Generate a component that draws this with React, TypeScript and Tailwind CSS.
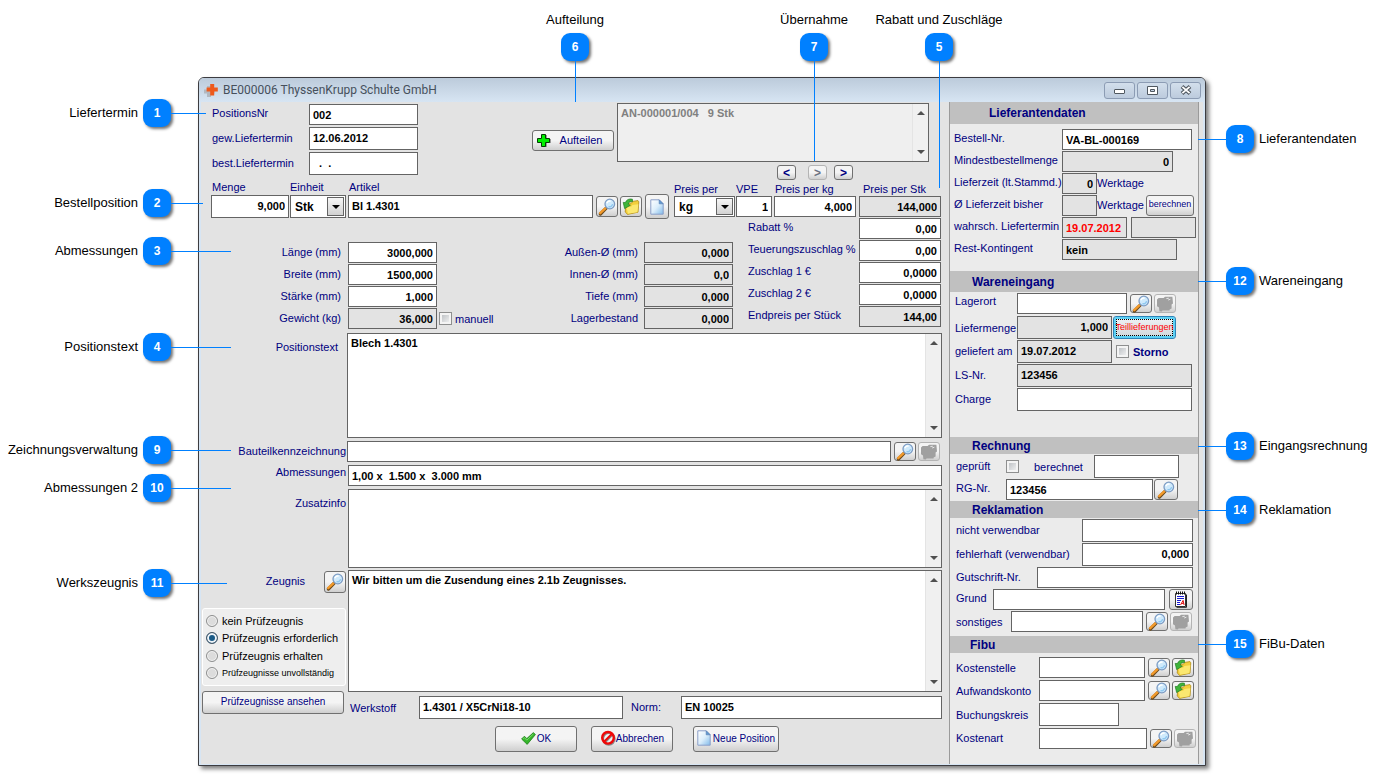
import { useState } from 'react'
import type { InputHTMLAttributes, ReactNode } from 'react'
import clsx from 'clsx'

const SANS = "font-['Liberation_Sans',Arial,sans-serif]"

const leftCallouts = [
  { no: 1, label: 'Liefertermin', top: 'top-[99px]', line: 'w-[35px]' },
  { no: 2, label: 'Bestellposition', top: 'top-[189px]', line: 'w-[32px]' },
  { no: 3, label: 'Abmessungen', top: 'top-[237px]', line: 'w-[60px]' },
  { no: 4, label: 'Positionstext', top: 'top-[333px]', line: 'w-[60px]' },
  { no: 9, label: 'Zeichnungsverwaltung', top: 'top-[436px]', line: 'w-[60px]' },
  { no: 10, label: 'Abmessungen 2', top: 'top-[474px]', line: 'w-[60px]' },
  { no: 11, label: 'Werkszeugnis', top: 'top-[569px]', line: 'w-[56px]' },
]

const rightCallouts = [
  { no: 8, label: 'Lieferantendaten', top: 'top-[125px]' },
  { no: 12, label: 'Wareneingang', top: 'top-[267px]' },
  { no: 13, label: 'Eingangsrechnung', top: 'top-[432px]' },
  { no: 14, label: 'Reklamation', top: 'top-[496px]' },
  { no: 15, label: 'FiBu-Daten', top: 'top-[630px]' },
]

const topCallouts = [
  { no: 6, label: 'Aufteilung', right: 'right-[727px]', line: 'h-[41px]' },
  { no: 7, label: 'Übernahme', right: 'right-[488px]', line: 'h-[100px]' },
  { no: 5, label: 'Rabatt und Zuschläge', right: 'right-[363px]', line: 'h-[127px]' },
]

/* ---------- Icons ---------- */

function SearchIcon() {
  return (
    <svg width="18" height="18" viewBox="0 0 18 18" aria-hidden="true">
      <path d="M8.2 10.2 2.4 16" stroke="#6b4a1c" strokeWidth="3.2" strokeLinecap="round" />
      <path d="M7.8 9.8 2.2 15.2" stroke="#f39a2b" strokeWidth="2.4" strokeLinecap="round" />
      <path d="M9.4 8.6 8 10" stroke="#777" strokeWidth="2" />
      <circle cx="11.8" cy="6" r="4.8" fill="#cfeafc" stroke="#7d9cc4" strokeWidth="1.3" />
      <path d="M8.8 5.2c.6-1.7 2.2-2.4 3.8-2" stroke="#fff" strokeWidth="1.4" fill="none" />
      <path d="M10.4 8.6c2 .7 3.8-.4 4.2-2.4" stroke="#8fc8f0" strokeWidth="1.4" fill="none" />
    </svg>
  )
}

function FolderIcon() {
  return (
    <svg width="18" height="18" viewBox="0 0 18 18" aria-hidden="true">
      <path d="M4 5.4 9.6 5l1-1.6 5.4-.8.8 1.2-.8 10.4L5.6 16.4 3.2 14z" fill="#f2cf3c" stroke="#b08a14" strokeWidth=".8" />
      <path d="m4.6 9.4 4.8-.8 1-1.6 6-.8-1 8-9.4 1.6z" fill="#fbe870" />
      <path d="M10.4 1.2C7.2.4 4.4 1.6 3.4 4.6L1.2 4.4l1.4 6.2 5.8-3.4-2.2-1c.4-2 2.2-3.2 4.4-2.6z" fill="#3fb53a" stroke="#1f7d22" strokeWidth=".7" />
    </svg>
  )
}

function PageIcon() {
  return (
    <svg width="14" height="16" viewBox="0 0 14 16" aria-hidden="true">
      <defs>
        <linearGradient id="page" x1="0" y1="0" x2="1" y2="1">
          <stop offset="0" stopColor="#ffffff" />
          <stop offset="0.5" stopColor="#dceefb" />
          <stop offset="1" stopColor="#7fbaea" />
        </linearGradient>
      </defs>
      <path d="M.8.8h8.4l4 4v10.4H.8z" fill="url(#page)" stroke="#8a9fc8" />
      <path d="M9.2.8v4h4z" fill="#5f9bd0" stroke="#5b82b8" strokeWidth=".7" />
    </svg>
  )
}

function BlobIcon() {
  return (
    <svg width="18" height="18" viewBox="0 0 18 18" aria-hidden="true">
      <path d="M1 4.4 2.6 3h5L9 1.8h7.4l.6 6.6-1.4 1.2v4l-2 .8v1.2H6.4L6 16.6l-2.6-.4L3 12.6l-2-1.4z" fill="#a0a0a0" />
      <path d="m10.4 3.6 2.4-.4M12.2 5l2.2-.8" stroke="#f0f0f0" strokeWidth=".9" />
    </svg>
  )
}

function NotepadIcon() {
  return (
    <svg width="14" height="17" viewBox="0 0 14 17" aria-hidden="true">
      <path d="M1.5 2.5h10v13h-10z" fill="#fff" stroke="#333" />
      <path d="M12.5 3.5v12.8H2.5" fill="none" stroke="#222" />
      <path d="M2.5.5v3M4.5.5v3M6.5.5v3M8.5.5v3M10.5.5v3" stroke="#111" />
      <path d="M3 5.5h7M3 7.5h7M3 9.5h4M3 11.5h3M3 13.5h3" stroke="#1a1ad0" />
      <path d="m6.5 14 2.6-4.6 1 4.6M7.4 12.4h2.4" stroke="#e01010" fill="none" />
    </svg>
  )
}

function PlusIcon() {
  return (
    <svg width="16" height="15" viewBox="0 0 16 15" aria-hidden="true">
      <path d="M6 2h5v4h4v4h-4v4H6v-4H2V6h4z" fill="#999" />
      <path d="M5.5 1.5h4v4h4v4h-4v4h-4v-4h-4v-4h4z" fill="#00f000" stroke="#043c04" strokeWidth="1" />
    </svg>
  )
}

function CheckIcon() {
  return (
    <svg width="15" height="13" viewBox="0 0 15 13" aria-hidden="true">
      <path d="M.6 7 3.4 4.2l2.4 2.4L12.4.6l2 2L6.2 12.4z" fill="#35b52a" stroke="#1e7f1a" strokeWidth=".8" />
      <path d="m2.2 6.8 1.2-1.1 2.4 2.4 6.6-6.1" stroke="#8be27c" strokeWidth=".8" fill="none" />
    </svg>
  )
}

function BanIcon() {
  return (
    <svg width="16" height="16" viewBox="0 0 16 16" aria-hidden="true">
      <circle cx="8.8" cy="8.8" r="5.8" fill="none" stroke="#888" strokeWidth="2.2" />
      <path d="m5 12.6 7.6-7.6" stroke="#888" strokeWidth="1.6" />
      <circle cx="8" cy="7.8" r="5.8" fill="none" stroke="#f00808" strokeWidth="2.4" />
      <path d="m4 11.8 7.8-7.8" stroke="#f00808" strokeWidth="2" />
    </svg>
  )
}

function LogoIcon() {
  return (
    <svg width="15" height="15" viewBox="0 0 15 15" aria-hidden="true">
      <path d="M3 3h4v3.5h3.5v4H7V14H3v-3.5H0v-4h3z" fill="#b2b8c0" />
      <path d="M6.2 1h4v3.6h3.6v4h-3.6v3.8h-4V8.6H2.6v-4h3.6z" fill="#ee5a1c" />
    </svg>
  )
}

/* ---------- Controls ---------- */

interface TextFieldProps extends InputHTMLAttributes<HTMLInputElement> {
  num?: boolean
  gray?: boolean
}

function TextField({ num, gray, className, ...rest }: TextFieldProps) {
  return (
    <input
      type="text"
      readOnly={ gray }
      className={ clsx(
        'min-w-0 border border-[#646464] px-[3px] text-[11px] font-bold outline-none',
        num && 'text-right',
        gray ? 'bg-[#e3e3e3]' : 'bg-white',
        className,
      ) }
      { ...rest }
    />
  )
}

function Caption({ htmlFor, className, children }: { htmlFor: string, className?: string, children: ReactNode }) {
  return (
    <label htmlFor={ htmlFor } className={ clsx('shrink-0 text-[11px] leading-[14px] whitespace-nowrap text-[#000080]', className) }>
      {children}
    </label>
  )
}

interface PushButtonProps {
  className?: string
  label?: string
  disabled?: boolean
  children: ReactNode
}

function PushButton({ className, label, disabled, children }: PushButtonProps) {
  return (
    <button
      type="button"
      aria-label={ label }
      disabled={ disabled }
      className={ clsx(
        'flex shrink-0 items-center justify-center rounded-[3px] border bg-linear-to-b from-[#f4f4f4] from-50% to-[#cfcfcf] whitespace-nowrap text-[#000080]',
        disabled ? 'border-[#b4b4b4]' : 'border-[#707070]',
        className,
      ) }
    >
      {children}
    </button>
  )
}

function SearchButton({ className = 'h-[19px] w-[22px]' }: { className?: string }) {
  return <PushButton label="Suchen" className={ className }><SearchIcon /></PushButton>
}

function FolderButton({ className = 'h-[19px] w-[22px]' }: { className?: string }) {
  return <PushButton label="Öffnen" className={ className }><FolderIcon /></PushButton>
}

function ClearButton() {
  return <PushButton label="Entfernen" className="h-[19px] w-[22px]" disabled><BlobIcon /></PushButton>
}

function TickBox({ id }: { id: string }) {
  return (
    <input
      id={ id }
      type="checkbox"
      className="size-[13px] shrink-0 appearance-none border border-[#8e8f8f] bg-linear-to-br from-[#b4b8bc] to-[#fafafa] shadow-[inset_0_0_0_2px_#f4f4f4] checked:bg-[#000080]"
    />
  )
}

function DropDown({ id, options, className }: { id: string, options: string[], className?: string }) {
  return (
    <div className={ clsx('relative shrink-0', className) }>
      <select id={ id } className="block size-full appearance-none border border-[#646464] bg-white px-1 text-[12px] font-bold outline-none">
        {options.map(o => <option key={ o }>{o}</option>)}
      </select>
      <span className="pointer-events-none absolute inset-y-[2px] right-[2px] flex w-[17px] items-center justify-center border border-[#646464] bg-linear-to-b from-[#f6f6f6] to-[#d2d2d2]">
        <span className="border-x-4 border-t-4 border-x-transparent border-t-black" />
      </span>
    </div>
  )
}

function Memo({ id, text, gray, className }: { id: string, text?: string, gray?: boolean, className?: string }) {
  return (
    <div className={ clsx('flex min-w-0 border border-[#646464]', gray ? 'bg-[#efefef]' : 'bg-white', className) }>
      <textarea
        id={ id }
        defaultValue={ text }
        readOnly={ gray }
        className={ clsx(
          'min-w-0 flex-1 resize-none overflow-hidden px-[3px] pt-[2px] text-[11px] leading-[14px] font-bold outline-none',
          gray && 'text-[#808080]',
        ) }
      />
      <div className="flex w-4 flex-col items-center justify-between border-l border-[#e4e4e4] bg-[#f0f0f0] py-[7px]">
        <span className="border-x-4 border-b-4 border-x-transparent border-b-[#505050]" />
        <span className="border-x-4 border-t-4 border-x-transparent border-t-[#505050]" />
      </div>
    </div>
  )
}

function Badge({ no }: { no: number }) {
  return (
    <span className="flex size-7 shrink-0 items-center justify-center rounded-[9px] bg-[#0080ff] text-[12px] font-bold text-white shadow-[2px_2px_3px_rgba(0,0,0,0.55)]">
      {no}
    </span>
  )
}

function PanelHeader({ className, children }: { className?: string, children: ReactNode }) {
  return <h2 className={ clsx('flex items-center bg-[#c0c0c0] text-[12px] font-bold text-[#000080]', className) }>{children}</h2>
}

/* ---------- Sections ---------- */

function TitleBar() {
  return (
    <header className="flex h-6 items-center rounded-t-[5px] bg-linear-to-b from-[#bccbdb] to-[#d7e5f3] pl-[5px] pr-1">
      <LogoIcon />
      <h1 className="ml-1 flex-1 font-['Roboto','Noto_Sans',sans-serif] text-[12px] text-[#46505c]">
        BE000006 ThyssenKrupp Schulte GmbH
      </h1>
      <div className="flex gap-[2px]">
        <button type="button" aria-label="Minimieren" className="flex h-[17px] w-[31px] items-center justify-center rounded-[3px] border border-[#8c9cb4] bg-linear-to-b from-[#d3dfec] to-[#bccbdd]">
          <span className="mt-[3px] h-[5px] w-[11px] rounded-[1px] border border-[#505860] bg-white" />
        </button>
        <button type="button" aria-label="Maximieren" className="flex h-[17px] w-[31px] items-center justify-center rounded-[3px] border border-[#8c9cb4] bg-linear-to-b from-[#d3dfec] to-[#bccbdd]">
          <svg width="11" height="9" viewBox="0 0 11 9" aria-hidden="true">
            <path d="M.5.5h10v8H.5z" fill="#fff" stroke="#505860" />
            <path d="M3.5 3.5h4v2h-4z" fill="#c5d2e2" stroke="#505860" />
          </svg>
        </button>
        <button type="button" aria-label="Schließen" className="flex h-[17px] w-[31px] items-center justify-center rounded-[3px] border border-[#8c9cb4] bg-linear-to-b from-[#d3dfec] to-[#bccbdd]">
          <svg width="12" height="10" viewBox="0 0 12 10" aria-hidden="true">
            <path d="m2 1.5 8 7M10 1.5l-8 7" stroke="#505860" strokeWidth="4" />
            <path d="m2.4 1.8 7.2 6.4M9.6 1.8 2.4 8.2" stroke="#fff" strokeWidth="1.8" />
          </svg>
        </button>
      </div>
    </header>
  )
}

function DatesAndSplit() {
  return (
    <div className="flex items-start justify-between pl-[9px] pr-[13px]">
      <div className="grid grid-cols-[98px_109px] gap-y-[2px] pt-[2px]">
        <Caption htmlFor="posnr" className="pl-px pt-[2px]">PositionsNr</Caption>
        <TextField id="posnr" className="h-[21px]" defaultValue="002" />
        <Caption htmlFor="gew" className="pl-px pt-1">gew.Liefertermin</Caption>
        <TextField id="gew" className="h-[23px] pb-[2px]" defaultValue="12.06.2012" />
        <Caption htmlFor="best" className="pl-px pt-1">best.Liefertermin</Caption>
        <TextField id="best" className="h-[23px] pb-[2px]" defaultValue="  .  ." />
      </div>
      <div className="flex items-start gap-[3px] pt-px">
        <PushButton className="mt-[27px] h-[21px] w-[82px] gap-2 pr-2 text-[11px]">
          <PlusIcon />
          Aufteilen
        </PushButton>
        <div className="flex w-[312px] flex-col gap-[3px]">
          <Memo id="aufteilung" gray className="h-[59px]" text="AN-000001/004   9 Stk" />
          <div className="flex pl-[160px] font-bold">
            <PushButton className="h-[15px] w-[19px] text-[12px]">&lt;</PushButton>
            <PushButton className="ml-3 h-[15px] w-[19px] text-[12px] text-gray-500" disabled>&gt;</PushButton>
            <PushButton className="ml-[7px] h-[15px] w-[19px] text-[12px]">&gt;</PushButton>
          </div>
        </div>
      </div>
    </div>
  )
}

function ArticleRow() {
  return (
    <div className="flex h-[38px] items-start pl-[9px] pr-px">
      <div className="flex w-[78px] flex-col gap-px">
        <Caption htmlFor="menge" className="pl-px">Menge</Caption>
        <TextField id="menge" num className="h-[23px] pb-[2px]" defaultValue="9,000" />
      </div>
      <div className="ml-px flex w-14 flex-col gap-px">
        <Caption htmlFor="einheit">Einheit</Caption>
        <DropDown id="einheit" options={ ['Stk', 'kg'] } className="h-[23px]" />
      </div>
      <div className="ml-[2px] flex min-w-0 flex-1 flex-col gap-px">
        <Caption htmlFor="artikel" className="pl-px">Artikel</Caption>
        <TextField id="artikel" className="h-[23px] pb-[2px]" defaultValue="Bl 1.4301" />
      </div>
      <div className="mt-[14px] flex items-center pl-[3px] pr-[5px]">
        <SearchButton className="h-[21px] w-[22px]" />
        <FolderButton className="ml-[2px] h-[21px] w-[22px]" />
        <PushButton label="Neu" className="ml-[3px] h-[25px] w-6"><PageIcon /></PushButton>
      </div>
      <div className="mt-[2px] flex w-[61px] flex-col">
        <Caption htmlFor="preisper">Preis per</Caption>
        <DropDown id="preisper" options={ ['kg', 'Stk'] } className="h-[21px]" />
      </div>
      <div className="mt-[2px] ml-px flex w-9 flex-col">
        <Caption htmlFor="vpe">VPE</Caption>
        <TextField id="vpe" num className="h-[21px]" defaultValue="1" />
      </div>
      <div className="mt-[2px] ml-[2px] flex w-[82px] flex-col">
        <Caption htmlFor="preiskg" className="pl-px">Preis per kg</Caption>
        <TextField id="preiskg" num className="h-[21px]" defaultValue="4,000" />
      </div>
      <div className="mt-[2px] ml-[3px] flex w-[82px] flex-col">
        <Caption htmlFor="preisstk" className="pl-1">Preis per Stk</Caption>
        <TextField id="preisstk" num gray className="h-[21px]" defaultValue="144,000" />
      </div>
    </div>
  )
}

const dimensions = [
  { id: 'laenge', label: 'Länge (mm)', value: '3000,000' },
  { id: 'breite', label: 'Breite (mm)', value: '1500,000' },
  { id: 'staerke', label: 'Stärke (mm)', value: '1,000' },
  { id: 'gewicht', label: 'Gewicht (kg)', value: '36,000', gray: true },
]

const diameters = [
  { id: 'aussen', label: 'Außen-Ø (mm)', value: '0,000' },
  { id: 'innen', label: 'Innen-Ø (mm)', value: '0,0' },
  { id: 'tiefe', label: 'Tiefe (mm)', value: '0,000' },
  { id: 'lager', label: 'Lagerbestand', value: '0,000' },
]

const surcharges = [
  { id: 'rabatt', label: 'Rabatt %', value: '0,00' },
  { id: 'teuerung', label: 'Teuerungszuschlag %', value: '0,00' },
  { id: 'zuschlag1', label: 'Zuschlag 1 €', value: '0,0000' },
  { id: 'zuschlag2', label: 'Zuschlag 2 €', value: '0,0000' },
  { id: 'endpreis', label: 'Endpreis per Stück', value: '144,00', gray: true },
]

function Dimensions() {
  return (
    <div className="flex items-start pl-[9px] pr-px">
      <div className="mt-6 flex flex-col gap-px">
        {dimensions.map(d => (
          <div key={ d.id } className="flex items-center">
            <Caption htmlFor={ d.id } className="w-[130px] pb-[2px] text-right">{d.label}</Caption>
            <TextField id={ d.id } num gray={ d.gray } className="ml-[7px] h-[21px] w-[89px]" defaultValue={ d.value } />
            {d.id === 'gewicht' && (
              <div className="ml-[2px] flex items-center gap-[3px]">
                <TickBox id="manuell" />
                <Caption htmlFor="manuell">manuell</Caption>
              </div>
            )}
          </div>
        ))}
      </div>
      <div className="mt-6 ml-auto flex flex-col gap-px">
        {diameters.map(d => (
          <div key={ d.id } className="flex items-center justify-end gap-[6px]">
            <Caption htmlFor={ d.id } className="pb-[2px]">{d.label}</Caption>
            <TextField id={ d.id } num gray className="h-[21px] w-[89px]" defaultValue={ d.value } />
          </div>
        ))}
      </div>
      <div className="ml-[15px] flex flex-col gap-px">
        {surcharges.map(s => (
          <div key={ s.id } className="flex items-center">
            <Caption htmlFor={ s.id } className="w-[111px] pb-[3px]">{s.label}</Caption>
            <TextField id={ s.id } num gray={ s.gray } className="h-[21px] w-[82px]" defaultValue={ s.value } />
          </div>
        ))}
      </div>
    </div>
  )
}

function Texts() {
  return (
    <div className="mt-1 flex flex-col gap-[3px]">
      <div className="flex">
        <Caption htmlFor="postext" className="w-[145px] pt-[7px] pr-[9px] text-right">Positionstext</Caption>
        <Memo id="postext" className="h-[105px] flex-1" text="Blech 1.4301" />
      </div>
      <div className="flex items-center">
        <Caption htmlFor="bauteil" className="w-[145px] pr-px pb-[2px] text-right">Bauteilkennzeichnung</Caption>
        <TextField id="bauteil" className="h-[21px] flex-1" />
        <div className="flex gap-[2px] pr-[2px] pl-[3px]">
          <SearchButton />
          <ClearButton />
        </div>
      </div>
      <div className="flex">
        <Caption htmlFor="abm" className="w-[146px] pr-[2px] text-right">Abmessungen</Caption>
        <TextField id="abm" className="h-[21px] flex-1" defaultValue="1,00 x  1.500 x  3.000 mm" />
      </div>
      <div className="flex">
        <Caption htmlFor="zusatz" className="w-[146px] pt-[7px] pr-[2px] text-right">Zusatzinfo</Caption>
        <Memo id="zusatz" className="h-[79px] flex-1" />
      </div>
    </div>
  )
}

const certStates = [
  { label: 'kein Prüfzeugnis', size: 'text-[11px]' },
  { label: 'Prüfzeugnis erforderlich', size: 'text-[11px]' },
  { label: 'Prüfzeugnis erhalten', size: 'text-[11px]' },
  { label: 'Prüfzeugnisse unvollständig', size: 'text-[9px]' },
]

function Certificate() {
  const [state, setState] = useState(1)

  return (
    <div className="mt-[2px] flex gap-[2px]">
      <div className="flex w-36 shrink-0 flex-col pt-px">
        <div className="flex items-start justify-end gap-[19px]">
          <Caption htmlFor="zeugnis" className="pt-[3px]">Zeugnis</Caption>
          <SearchButton className="h-[22px] w-[22px]" />
        </div>
        <div role="radiogroup" className="mt-[15px] flex h-[78px] flex-col justify-between rounded-[3px] border border-white bg-[#eeeeee] py-1 pl-[3px]">
          {certStates.map((c, i) => (
            <label key={ c.label } className={ clsx('flex items-center gap-1 leading-4 whitespace-nowrap', c.size) }>
              <input
                type="radio"
                name="cert"
                checked={ state === i }
                onChange={ () => setState(i) }
                className="size-3 shrink-0 appearance-none rounded-full border border-[#8e8f8f] bg-[#dcdcdc] shadow-[inset_0_0_0_1px_#f4f4f4] checked:border-[#4a5a68] checked:bg-[#1a5a86] checked:shadow-[inset_0_0_0_2px_#f0f4f8]"
              />
              {c.label}
            </label>
          ))}
        </div>
        <PushButton className="mt-[5px] h-[23px] w-[142px] pb-[2px] text-[10px]">Prüfzeugnisse ansehen</PushButton>
      </div>
      <div className="flex min-w-0 flex-1 flex-col gap-1">
        <Memo id="zeugnis" className="h-[122px]" text="Wir bitten um die Zusendung eines 2.1b Zeugnisses." />
        <div className="flex items-center pl-[2px]">
          <Caption htmlFor="werkstoff" className="w-[69px]">Werkstoff</Caption>
          <TextField id="werkstoff" className="h-[23px] w-[204px] pb-[2px]" defaultValue="1.4301 / X5CrNi18-10" />
          <Caption htmlFor="norm" className="ml-2 w-[50px] pb-[2px]">Norm:</Caption>
          <TextField id="norm" className="h-[23px] flex-1 pb-[2px]" defaultValue="EN 10025" />
        </div>
      </div>
    </div>
  )
}

function SupplierPanel() {
  return (
    <aside className="w-[250px] shrink-0 border-x border-[#9a9a9a] bg-[#ebebeb]">
      <PanelHeader className="h-[22px] pl-[39px]">Lieferantendaten</PanelHeader>
      <div className="flex flex-col gap-px pt-[5px] pl-1">
        <div className="flex items-center">
          <Caption htmlFor="bestellnr" className="w-[108px] pb-1">Bestell-Nr.</Caption>
          <TextField id="bestellnr" className="h-[21px] w-[130px]" defaultValue="VA-BL-000169" />
        </div>
        <div className="flex items-center">
          <Caption htmlFor="mindest" className="w-[108px] pb-1">Mindestbestellmenge</Caption>
          <TextField id="mindest" num gray className="h-[21px] w-[111px]" defaultValue="0" />
        </div>
        <div className="flex items-center">
          <Caption htmlFor="lzstamm" className="w-[108px] pb-1">Lieferzeit (lt.Stammd.)</Caption>
          <TextField id="lzstamm" num gray className="h-[21px] w-[35px]" defaultValue="0" />
          <Caption htmlFor="lzstamm" className="pb-[2px]">Werktage</Caption>
        </div>
        <div className="flex items-center">
          <Caption htmlFor="lzbisher" className="w-[108px] pb-1">Ø Lieferzeit bisher</Caption>
          <TextField id="lzbisher" gray className="h-[21px] w-[35px]" />
          <Caption htmlFor="lzbisher" className="w-[49px] pb-[2px]">Werktage</Caption>
          <PushButton className="h-[21px] w-12 pb-[2px] text-[9px]">berechnen</PushButton>
        </div>
        <div className="flex items-center">
          <Caption htmlFor="wahrsch" className="w-[108px] pb-1">wahrsch. Liefertermin</Caption>
          <TextField id="wahrsch" gray className="h-[21px] w-[65px] text-[#f00]" defaultValue="19.07.2012" />
          <TextField aria-label="Lieferwoche" gray className="ml-1 h-[21px] w-[65px]" />
        </div>
        <div className="flex items-center">
          <Caption htmlFor="rest" className="w-[108px] pb-1">Rest-Kontingent</Caption>
          <TextField id="rest" gray className="h-[21px] w-[115px]" defaultValue="kein" />
        </div>
      </div>

      <PanelHeader className="mt-[11px] h-[21px] pl-[22px]">Wareneingang</PanelHeader>
      <div className="flex flex-col gap-px pt-px pl-[5px]">
        <div className="flex items-center">
          <Caption htmlFor="lagerort" className="w-[62px] pb-[6px]">Lagerort</Caption>
          <TextField id="lagerort" className="mr-[3px] h-[21px] w-[110px]" />
          <SearchButton />
          <span className="w-[2px]" />
          <ClearButton />
        </div>
        <div className="mt-px flex items-center">
          <Caption htmlFor="liefermenge" className="w-[62px]">Liefermenge</Caption>
          <TextField id="liefermenge" num gray className="h-[23px] w-[95px] pb-[2px]" defaultValue="1,000" />
          <button type="button" className="ml-px flex h-[23px] w-[63px] items-center justify-center overflow-hidden rounded-[3px] border border-[#2c84b8] bg-linear-to-b from-[#f0f4f6] to-[#cfd6da] p-[2px] shadow-[inset_0_0_0_2px_#5cd0f4]">
            <span className="flex size-full items-center justify-center border border-dotted border-black text-[9px] whitespace-nowrap text-[#f00]">
              Teillieferungen
            </span>
          </button>
        </div>
        <div className="flex items-center">
          <Caption htmlFor="geliefert" className="w-[62px] pb-[2px]">geliefert am</Caption>
          <TextField id="geliefert" gray className="mr-1 h-[23px] w-[95px] pb-[2px]" defaultValue="19.07.2012" />
          <TickBox id="storno" />
          <Caption htmlFor="storno" className="pl-1 font-bold">Storno</Caption>
        </div>
        <div className="flex items-center">
          <Caption htmlFor="lsnr" className="w-[62px] pb-[2px]">LS-Nr.</Caption>
          <TextField id="lsnr" gray className="h-[23px] w-[175px] pb-[2px]" defaultValue="123456" />
        </div>
        <div className="flex items-center">
          <Caption htmlFor="charge" className="w-[62px] pb-[2px]">Charge</Caption>
          <TextField id="charge" className="h-[23px] w-[175px]" />
        </div>
      </div>

      <PanelHeader className="mt-[26px] h-[17px] pl-[22px]">Rechnung</PanelHeader>
      <div className="flex flex-col gap-px pt-px pl-[6px]">
        <div className="flex items-center">
          <Caption htmlFor="geprueft" className="w-[50px] pb-[2px]">geprüft</Caption>
          <TickBox id="geprueft" />
          <Caption htmlFor="berechnet" className="ml-[15px] w-[60px]">berechnet</Caption>
          <TextField id="berechnet" className="h-[23px] w-[85px]" />
        </div>
        <div className="flex items-center">
          <Caption htmlFor="rgnr" className="w-[50px] pb-1">RG-Nr.</Caption>
          <TextField id="rgnr" className="mr-px h-[21px] w-[147px]" defaultValue="123456" />
          <SearchButton className="h-[21px] w-6" />
        </div>
      </div>

      <PanelHeader className="mt-px h-[17px] pl-[22px]">Reklamation</PanelHeader>
      <div className="flex flex-col gap-px pt-px pl-[6px]">
        <div className="flex items-center">
          <Caption htmlFor="nichtverw" className="w-[126px] pb-[2px]">nicht verwendbar</Caption>
          <TextField id="nichtverw" className="h-[23px] w-[111px]" />
        </div>
        <div className="flex items-center">
          <Caption htmlFor="fehlerhaft" className="w-[126px] pb-[2px]">fehlerhaft (verwendbar)</Caption>
          <TextField id="fehlerhaft" num className="h-[23px] w-[111px] pb-[2px]" defaultValue="0,000" />
        </div>
        <div className="flex items-center">
          <Caption htmlFor="gutschrift" className="w-[81px] pb-[2px]">Gutschrift-Nr.</Caption>
          <TextField id="gutschrift" className="h-[21px] w-[156px]" />
        </div>
        <div className="flex items-center">
          <Caption htmlFor="grund" className="w-[37px] pb-1">Grund</Caption>
          <TextField id="grund" className="mr-1 h-[21px] w-[172px]" />
          <PushButton label="Notiz" className="h-[21px] w-6"><NotepadIcon /></PushButton>
        </div>
        <div className="flex items-center">
          <Caption htmlFor="sonstiges" className="w-[55px]">sonstiges</Caption>
          <TextField id="sonstiges" className="mr-[3px] h-[21px] w-[132px]" />
          <SearchButton />
          <span className="w-[2px]" />
          <ClearButton />
        </div>
      </div>

      <PanelHeader className="mt-1 h-[17px] pl-5">Fibu</PanelHeader>
      <div className="flex flex-col gap-[2px] pt-1 pl-[6px]">
        <div className="flex items-center">
          <Caption htmlFor="kostenstelle" className="w-[83px]">Kostenstelle</Caption>
          <TextField id="kostenstelle" className="mr-[3px] h-[21px] w-[106px]" />
          <SearchButton />
          <span className="w-[2px]" />
          <FolderButton />
        </div>
        <div className="flex items-center">
          <Caption htmlFor="aufwand" className="w-[83px]">Aufwandskonto</Caption>
          <TextField id="aufwand" className="mr-[3px] h-[21px] w-[106px]" />
          <SearchButton />
          <span className="w-[2px]" />
          <FolderButton />
        </div>
        <div className="flex items-center">
          <Caption htmlFor="buchung" className="w-[83px]">Buchungskreis</Caption>
          <TextField id="buchung" className="h-[23px] w-20" />
        </div>
        <div className="flex items-center">
          <Caption htmlFor="kostenart" className="w-[83px] pb-[2px]">Kostenart</Caption>
          <TextField id="kostenart" className="mr-[3px] h-[21px] w-[108px]" />
          <SearchButton />
          <span className="w-[2px]" />
          <ClearButton />
        </div>
      </div>
    </aside>
  )
}

export default function App() {
  return (
    <div className={ clsx('relative min-h-screen min-w-[1240px] bg-white pt-[77px] pr-[176px] pb-2 pl-[198px] text-black', SANS) }>
      <main className="rounded-t-[6px] border border-[#3c3c40] bg-[#d7e5f3] shadow-[3px_3px_4px_rgba(0,0,0,0.5)]">
        <TitleBar />
        <div className="mx-[2px] mb-px flex bg-[#e3e3e3]">
          <form className="min-w-0 flex-1 pr-[7px] pb-[12px] pl-px">
            <DatesAndSplit />
            <ArticleRow />
            <Dimensions />
            <Texts />
            <Certificate />
            <div className="mt-[7px] flex pl-[293px] text-[10px]">
              <PushButton className="h-[26px] w-[82px] gap-px pb-[2px]">
                <CheckIcon />
                OK
              </PushButton>
              <PushButton className="ml-[14px] h-[26px] w-[82px] pb-[2px]">
                <BanIcon />
                Abbrechen
              </PushButton>
              <PushButton className="ml-5 h-[26px] w-[86px] gap-[2px] pb-[2px]">
                <PageIcon />
                Neue Position
              </PushButton>
            </div>
          </form>
          <SupplierPanel />
          <div className="w-1 shrink-0 bg-[#e3e3e3]" />
        </div>
      </main>

      {/* numbered callouts pinned around the window */}
      {leftCallouts.map(c => (
        <div key={ c.no } className={ clsx('absolute left-0 flex items-center', c.top) }>
          <span className="w-[138px] text-right text-[13px] whitespace-nowrap">{c.label}</span>
          <span className="w-[5px]" />
          <Badge no={ c.no } />
          <span className={ clsx('mt-px h-px bg-[#0080ff]', c.line) } />
        </div>
      ))}
      {rightCallouts.map(c => (
        <div key={ c.no } className={ clsx('absolute right-0 flex w-[184px] items-center', c.top) }>
          <span className="mt-px h-px w-7 bg-[#0080ff]" />
          <Badge no={ c.no } />
          <span className="ml-[5px] text-[13px] whitespace-nowrap">{c.label}</span>
        </div>
      ))}
      {topCallouts.map(c => (
        <div key={ c.no } className={ clsx('absolute top-[11px] flex w-40 flex-col items-center', c.right) }>
          <span className="mb-1 text-[13px] leading-[18px] whitespace-nowrap">{c.label}</span>
          <Badge no={ c.no } />
          <span className={ clsx('ml-px w-px bg-[#0080ff]', c.line) } />
        </div>
      ))}
    </div>
  )
}
